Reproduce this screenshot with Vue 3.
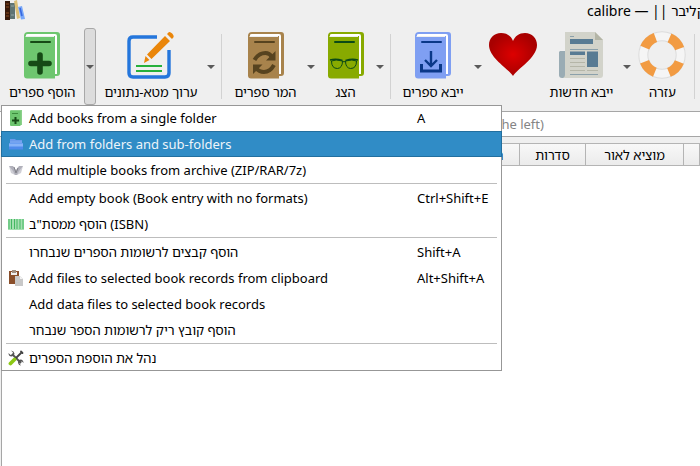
<script setup>
const tools = [
  { id: 'add', label: 'הוסף ספרים', arrow: true, open: true },
  { id: 'edit', label: 'ערוך מטא-נתונים', arrow: true, sepAfter: true },
  { id: 'convert', label: 'המר ספרים', arrow: true },
  { id: 'view', label: 'הצג', arrow: true, sepAfter: true },
  { id: 'fetch', label: 'ייבא ספרים', arrow: true },
  { id: 'donate', label: '', aria: 'Donate' },
  { id: 'news', label: 'ייבא חדשות', arrow: true },
  { id: 'help', label: 'עזרה', sepAfter: true },
]

const books = {
  add: { main: '#6ec66f', ink: '#164a16' },
  convert: { main: '#a8834c', ink: '#57431f' },
  view: { main: '#88aa00', ink: '#0c4a16' },
  fetch: { main: '#7f9ff2', ink: '#0a3888' },
}

const groups = [
  [
    { label: 'Add books from a single folder', key: 'A', icon: 'book' },
    { label: 'Add from folders and sub-folders', key: '', icon: 'folder', active: true },
    { label: 'Add multiple books from archive (ZIP/RAR/7z)', key: '', icon: 'archive' },
  ],
  [
    { label: 'Add empty book (Book entry with no formats)', key: 'Ctrl+Shift+E' },
    { label: 'הוסף ממסת"ב (ISBN)', key: '', icon: 'barcode' },
  ],
  [
    { label: 'הוסף קבצים לרשומות הספרים שנבחרו', key: 'Shift+A' },
    { label: 'Add files to selected book records from clipboard', key: 'Alt+Shift+A', icon: 'paste' },
    { label: 'Add data files to selected book records', key: '' },
    { label: 'הוסף קובץ ריק לרשומות הספר שנבחר', key: '' },
  ],
  [{ label: 'נהל את הוספת הספרים', key: '', icon: 'tools' }],
]

const columns = [
  { id: 'tags', label: 'תגיות' },
  { id: 'series', label: 'סדרות' },
  { id: 'publisher', label: 'מוציא לאור' },
  { id: 'rest', label: '' },
]
</script>

<template>
  <div class="window">
    <header class="titlebar">
      <svg class="logo" viewBox="0 0 20 20" aria-hidden="true">
        <path d="M0 1h5v19H0z" fill="#35190a" />
        <path d="M1 4h3M1 16h3M1 13h3M1 7h3" stroke="#8a4b1e" />
        <path d="M5 3h5v16H5z" fill="#5f7474" />
        <path d="M6 6h3M6 15h3" stroke="#93a5a5" />
        <path d="M9 1l3-1 3 18-3 1z" fill="#dcc078" />
        <path d="M13 7l4-1 3 13-4 .5z" fill="#79a8f8" />
        <path d="M15 8l2 8" stroke="#3768e0" stroke-width="1.5" />
      </svg>
      <h1 class="title">calibre — || קליבר</h1>
    </header>

    <nav class="toolbar" aria-label="Main toolbar">
      <template v-for="t in tools" :key="t.id">
        <div class="tool">
          <button class="main" type="button" :aria-label="t.label || t.aria">
            <svg class="icon" viewBox="0 0 48 48" aria-hidden="true">
              <g v-if="books[t.id]">
                <path d="M6 5q0-4 4-4h29q3 0 3 3v38q0 3-3 3h-3V5H8z" :fill="books[t.id].main" />
                <path d="M8 4q0-1 2-1h27q2 0 2 2v38h-2V5H8z" fill="#fff" />
                <path d="M6 4l2 2h29v41.500H9q-3 0-3-3z" :fill="books[t.id].main" />
                <path d="M13 11h19" :stroke="books[t.id].ink" stroke-width="2" stroke-linecap="round" />
                <path v-if="t.id === 'add'" d="M22 24v17M13 32.500h18" stroke="#164a16" stroke-width="5.600" stroke-linecap="round" />
                <g v-if="t.id === 'convert'" fill="none" stroke="#57431f" stroke-width="4">
                  <path d="M12.500 29q4-7 11-7 4 0 6.500 4" />
                  <path d="M32 34q-4 7-10 7-5 0-8-4" />
                  <path d="M33.500 20v9.500H24zM11 43v-9.500h9.500z" fill="#57431f" stroke="none" />
                </g>
                <g v-if="t.id === 'view'" fill="none" stroke="#0c4a16" stroke-width="1">
                  <path d="M9.500 30q4-2 11 0 0 7-5 7.500-6 0-6-7.500zM34.500 30q-4-2-11 0 0 7 5 7.500 6 0 6-7.500zM20.500 31q1.500-1 3 0" />
                  <path d="M8 29q6-1.500 12.500.5M36 29q-6-1.500-12.500.5" stroke-width="1.500" />
                </g>
                <g v-if="t.id === 'fetch'" fill="none" stroke="#0a3888" stroke-width="2.400">
                  <path d="M22 20v15M16 29l6 6 6-6" />
                  <path d="M12.500 33v7h19v-7" stroke-width="3" />
                </g>
              </g>
              <g v-else-if="t.id === 'edit'">
                <path d="M30 6H6Q2 6 2 10v32q0 4 4 4h32q4 0 4-4V19" fill="none" stroke="#2476dc" stroke-width="3.400" />
                <path d="M9 35h26M9 40h26" stroke="#26b03c" stroke-width="1.800" />
                <path d="M38 5l5 5-18.500 18-4.500-4.500zM40 3l2-2q1.500-.3 3.200 1.500T46.700 6L45 8z" fill="#ea860a" />
                <path d="M18.500 25l4 4-5.500 3z" fill="#ea860a" />
              </g>
              <g v-else-if="t.id === 'donate'">
                <defs>
                  <radialGradient id="heart">
                    <stop offset="0" stop-color="#dd0000" />
                    <stop offset="1" stop-color="#a80000" />
                  </radialGradient>
                </defs>
                <path d="M24 45C20 38 0 27 0 14 0 7 5 2 12 2c6 0 10 3 12 8 2-5 6-8 12-8 7 0 12 5 12 12 0 13-20 24-24 31z" fill="url(#heart)" />
              </g>
              <g v-else-if="t.id === 'news'">
                <path d="M3 20h6v27H5q-3 0-3-3V21z" fill="#9aacb4" />
                <path d="M8 1h30l8 8v35q0 3-3 3H6q2-1 2-3z" fill="#d2d3ca" />
                <path d="M38 1l8 8h-8z" fill="#b4b5a6" />
                <path d="M13 8h23v5H13zM13 20.500h15v3.500H13zM30 20.500h11V36H30z" fill="#587b93" />
                <path d="M13 5.500h4M13 18.500h28M13 43.500h28" stroke="#8ba0aa" />
                <path d="M13 27.500h15M13 31.500h15M13 35.500h15M13 39.500h15M30 39.500h11" stroke="#b5b6a8" stroke-width="1.200" />
              </g>
              <g v-else>
                <circle cx="24" cy="24" r="18.700" fill="none" stroke="#dcdcdc" stroke-width="10" />
                <circle cx="24" cy="24" r="18.700" fill="none" stroke="#f5f5f5" stroke-width="8" />
                <g fill="none" stroke="#f29b42" stroke-width="9.600" stroke-dasharray="15 14.374">
                  <circle cx="24" cy="24" r="18.700" transform="rotate(22 24 24)" />
                </g>
              </g>
            </svg>
            <span v-if="t.label" class="label" dir="rtl">{{ t.label }}</span>
          </button>
          <button v-if="t.arrow" class="arrow" :class="{ open: t.open }" type="button" :aria-label="t.label + ' menu'">
            <svg viewBox="0 0 8 4" aria-hidden="true"><path d="M0 0h8L4 4z" /></svg>
          </button>
        </div>
        <span v-if="t.sepAfter" class="divider"></span>
      </template>
    </nav>

    <div class="searchbar">
      <input class="search" type="text" aria-label="Search" placeholder="Search (For advanced search click the gear icon to the left)" />
    </div>

    <main class="library">
      <table class="books">
        <thead>
          <tr>
            <th v-for="c in columns" :key="c.id" :class="c.id">{{ c.label }}</th>
          </tr>
        </thead>
      </table>
    </main>

    <div class="menu" role="menu">
      <div v-for="(g, i) in groups" :key="i" class="group">
        <button v-for="m in g" :key="m.label" class="item" :class="{ active: m.active }" type="button" role="menuitem">
          <svg class="glyph" viewBox="0 0 16 16" aria-hidden="true">
            <g v-if="m.icon === 'book'">
              <path d="M2 1q0-1 1-1h11v15h-2z" fill="#8bd18b" />
              <path d="M2 1h10.500v15H3q-1 0-1-1z" fill="#6ec66f" />
              <path d="M4 3.500h6" stroke="#3d8b3d" />
              <path d="M7.500 7v7M4 10.500h7" stroke="#164a16" stroke-width="2" />
            </g>
            <g v-else-if="m.icon === 'folder'">
              <path d="M2 3h5l1 1h6v4H2z" fill="#6a9aec" />
              <path d="M2 5h12v3H2z" fill="#74a3f0" />
              <path d="M1 7h14v6.500H1z" fill="#4f8bec" />
              <path d="M1 7.500h14v3H1z" fill="#86b3f8" />
            </g>
            <g v-else-if="m.icon === 'archive'">
              <path d="M1 4l6 2v7l-4-2zM15 4L9 6v7l4-2z" fill="#cfcfd6" />
              <path d="M1 4h4l3 4 3-4h4l-4 5-2 4H7L5 9z" fill="#b0b0ba" />
              <path d="M6 5l2 6 2-5" fill="none" stroke="#808088" />
            </g>
            <g v-else-if="m.icon === 'barcode'">
              <path d="M0 3h16v11H0z" fill="#a5e0b2" />
              <path d="M1 3v10M3.500 3v10M6.500 3v10M9 3v10M12 3v10M15 3v10" stroke="#42b861" />
            </g>
            <g v-else-if="m.icon === 'paste'">
              <path d="M1 1h10v13H1z" fill="#8a4f2b" />
              <path d="M3 2h6v3H3z" fill="#f0f0f0" />
              <path d="M4 0h4v3H4z" fill="#a08e80" />
              <path d="M7 6h5l3 3v7H7z" fill="#c8c8c8" />
              <path d="M12 6v3h3" fill="#f2f2f2" />
            </g>
            <g v-else-if="m.icon === 'tools'" fill="none">
              <path d="M4 4l9 9" stroke="#555" stroke-width="2" />
              <path d="M3 .5l2 2-.500 2-2 .500-2-2q0 3 2.500 3.500 3 0 3.500-3Q6 1 3 .500zM13 15.500l-1.500-2 .500-1.500 2-.500 1.500 1.500q0-3-2.500-3.500-3 0-3 3 .500 3 3 3z" fill="#555" />
              <path d="M8 8l5.500-5.500M13 1.500l1.500 1.500" stroke="#444" stroke-width="1.800" stroke-linecap="round" />
              <path d="M2.500 13.500L6.500 9.500" stroke="#8cc814" stroke-width="3.800" stroke-linecap="round" />
            </g>
          </svg>
          <span class="text">{{ m.label }}</span>
          <kbd class="key">{{ m.key }}</kbd>
        </button>
      </div>
    </div>
  </div>
</template>

<style>
body {
  background: #fff;
}
</style>

<style scoped>
.window {
  position: relative;
  overflow: hidden;
  min-height: 100vh;
  display: flex;
  flex-direction: column;
  box-sizing: border-box;
  background: #efefef;
  color: #000;
  font: 13px/18px "Noto Sans", "Noto Sans Hebrew", sans-serif;
}
button,
input {
  font: inherit;
  color: inherit;
  border: 0;
  margin: 0;
  padding: 0;
  background: none;
}
.titlebar {
  display: flex;
  justify-content: space-between;
  height: 28px;
  padding-left: 5px;
}
.logo {
  width: 20px;
  height: 20px;
}
.title {
  width: 113px;
  margin: 0;
  padding-top: 2px;
  font-size: 14px;
  font-weight: 400;
  white-space: nowrap;
}
.toolbar {
  display: flex;
  gap: 1px;
  height: 77px;
  padding-left: 1px;
}
.tool {
  display: flex;
  flex: none;
}
.main {
  display: flex;
  flex-direction: column;
  align-items: center;
  padding: 3px 4px 0;
}
.icon {
  width: 48px;
  height: 48px;
}
.label {
  padding: 4px 4px 0;
  white-space: nowrap;
}
.arrow {
  display: flex;
  align-items: center;
  justify-content: center;
  width: 12px;
  box-sizing: border-box;
}
.arrow svg {
  width: 8px;
  height: 4px;
  fill: #5a5a5a;
}
.arrow.open {
  background: #dcdcdc;
  border: 1px solid #a8a8a8;
  border-radius: 3px;
}
.divider {
  flex: none;
  width: 1px;
  margin: 6px 3px;
  background: #d2d2d2;
}
.searchbar {
  padding-top: 6px;
  background: #efefef;
}
.search {
  display: block;
  width: 100%;
  height: 26px;
  box-sizing: border-box;
  padding-left: 190px;
  border: solid #a6a6a6;
  border-width: 1px 0;
  background: #fff;
  outline: none;
}
.search::placeholder {
  color: #858585;
  opacity: 1;
}
.library {
  flex: 1;
  margin: 6px 0 0 1px;
  border-left: 1px solid #a6a6a6;
  background: #fff;
}
.books {
  width: 100%;
  table-layout: fixed;
  border-collapse: separate;
  border-spacing: 0;
}
th {
  height: 23px;
  box-sizing: border-box;
  padding: 0;
  border: solid #b4b4b4;
  border-width: 1px 1px 1px 0;
  background: linear-gradient(#f8f8f8, #ebebeb);
  font-weight: 400;
  white-space: nowrap;
}
.tags {
  padding-left: 456px;
  width: 518px;
}
.series {
  width: 66px;
}
.publisher {
  width: 98px;
}
.menu {
  position: absolute;
  left: 1px;
  top: 105px;
  width: 501px;
  background: #fff;
  box-shadow: inset 0 0 0 1px #979797;
}
.group + .group::before {
  content: "";
  display: block;
  height: 1px;
  margin: 0 5px 1px;
  background: #bdbdbd;
}
.item {
  display: grid;
  grid-template-columns: 16px 1fr 80px;
  column-gap: 5px;
  align-items: center;
  width: 100%;
  height: 26px;
  box-sizing: border-box;
  padding: 0 5px 0 7px;
  text-align: left;
  white-space: nowrap;
}
.item.active {
  background: #308cc6;
  color: #eef4f9;
  box-shadow: inset 0 0 0 1px #226f9f;
}
.glyph {
  width: 16px;
  height: 16px;
}
.key {
  font: inherit;
}
</style>
